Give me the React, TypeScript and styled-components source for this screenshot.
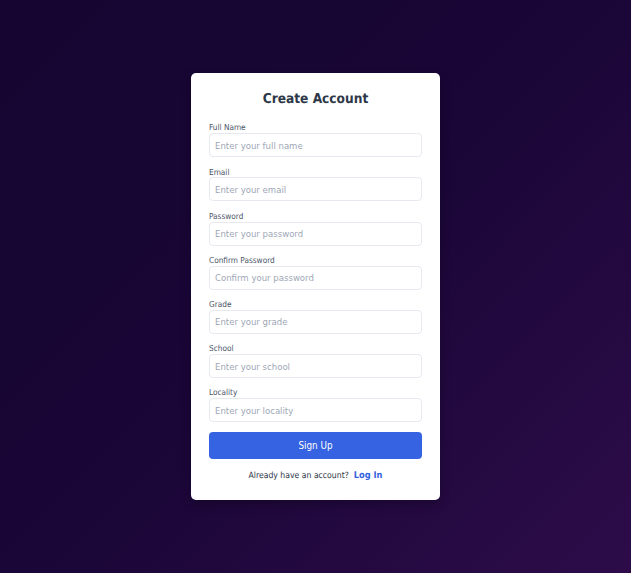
import React from "react";
import styled, { createGlobalStyle } from "styled-components";

const GlobalStyle = createGlobalStyle`
  html, body {
    margin: 0;
    padding: 0;
  }
  body {
    font-family: "DejaVu Sans Condensed", "DejaVu Sans", sans-serif;
    font-stretch: condensed;
    text-rendering: geometricPrecision;
  }
  * { box-sizing: border-box; }
`;

const Page = styled.div`
  min-height: 100vh;
  display: flex;
  align-items: center;
  justify-content: center;
  background: linear-gradient(135deg, #150530 0%, #1a0637 50%, #2d0c49 100%);
`;

const Card = styled.div`
  width: 249px;
  background: #ffffff;
  border-radius: 5px;
  padding: 18px 18px 17px;
  box-shadow: 0 4px 10px rgba(0, 0, 0, 0.25);
  display: flex;
  flex-direction: column;
`;

const Title = styled.h1`
  margin: 0 0 14px;
  font-size: 13.6px;
  line-height: 17.4px;
  font-weight: 700;
  color: #2d3748;
  text-align: center;
`;

const Field = styled.div`
  display: flex;
  flex-direction: column;
  margin-bottom: 9.27px;
`;

const Label = styled.label`
  font-size: 8.2px;
  line-height: 10.9px;
  color: #4a5568;
`;

const Input = styled.input`
  height: 24px;
  width: 100%;
  border: 1px solid #e6e9ef;
  border-radius: 4px;
  padding: 0 5px;
  font-family: inherit;
  font-stretch: condensed;
  font-size: 9.5px;
  color: #2d3748;
  background: #fff;
  outline: none;
  &::placeholder {
    color: #9ea7b6;
  }
`;

const Button = styled.button`
  margin-top: 0;
  height: 27px;
  width: 100%;
  border: none;
  border-radius: 4px;
  background: #3563e1;
  color: #ffffff;
  font-family: inherit;
  font-stretch: condensed;
  font-size: 9.8px;
  cursor: pointer;
`;

const Footer = styled.p`
  margin: 10.5px 0 0;
  text-align: center;
  font-size: 8.6px;
  line-height: 13px;
  color: #2d3748;
`;

const LoginLink = styled.a`
  margin-left: 5px;
  font-size: 9.2px;
  font-weight: 700;
  color: #3563e1;
  text-decoration: none;
`;

const fields = [
  { label: "Full Name", placeholder: "Enter your full name", type: "text" },
  { label: "Email", placeholder: "Enter your email", type: "email" },
  { label: "Password", placeholder: "Enter your password", type: "password" },
  { label: "Confirm Password", placeholder: "Confirm your password", type: "password" },
  { label: "Grade", placeholder: "Enter your grade", type: "text" },
  { label: "School", placeholder: "Enter your school", type: "text" },
  { label: "Locality", placeholder: "Enter your locality", type: "text" },
];

export default function App() {
  return (
    <>
      <GlobalStyle />
      <Page>
        <Card>
          <Title>Create Account</Title>
          {fields.map((f) => (
            <Field key={f.label}>
              <Label>{f.label}</Label>
              <Input type={f.type} placeholder={f.placeholder} />
            </Field>
          ))}
          <Button type="button">Sign Up</Button>
          <Footer>
            Already have an account?
            <LoginLink href="#">Log In</LoginLink>
          </Footer>
        </Card>
      </Page>
    </>
  );
}
